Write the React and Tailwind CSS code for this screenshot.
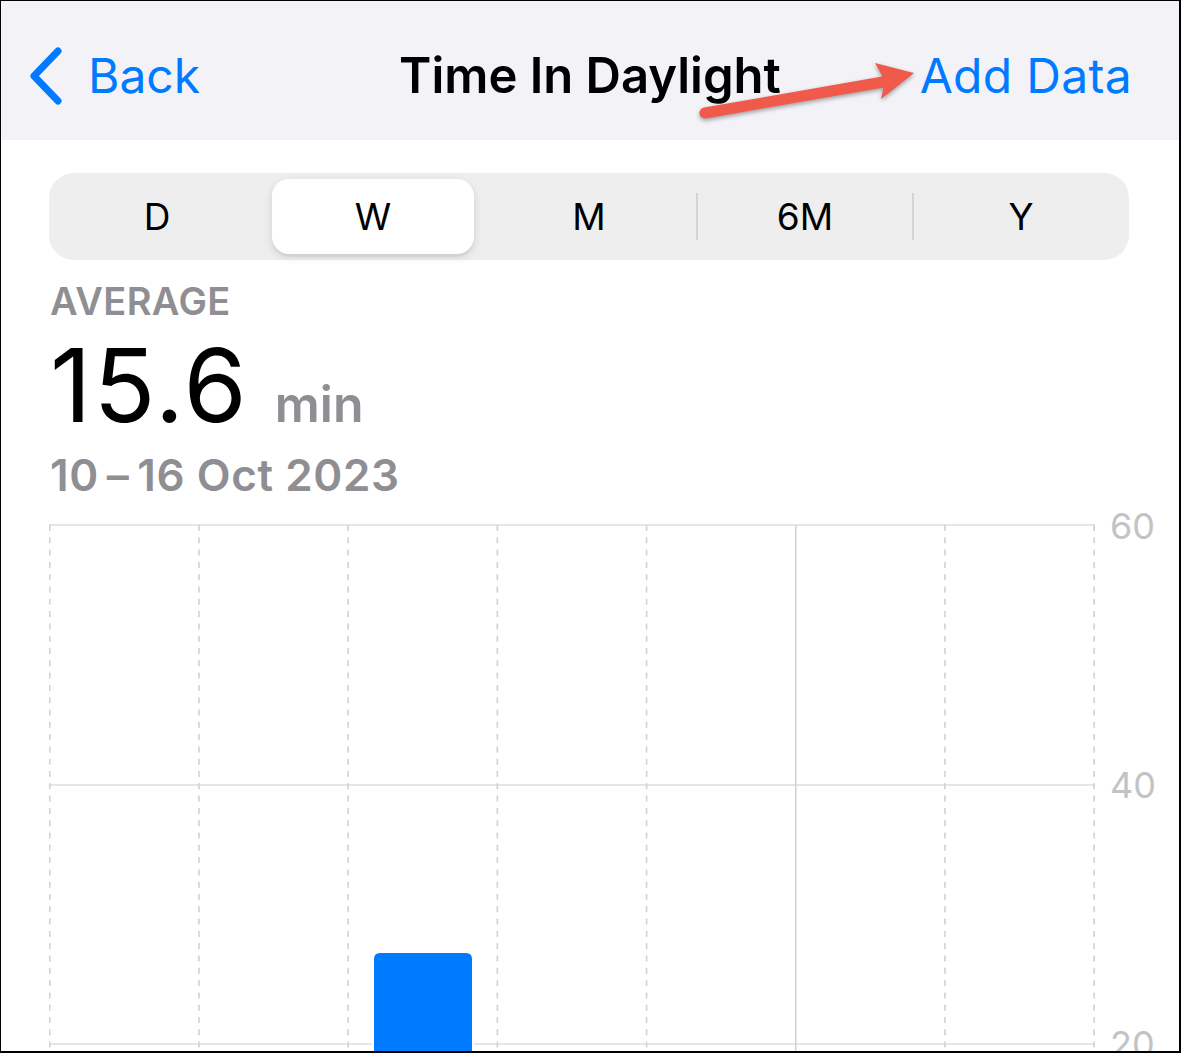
import React from "react";

const BLUE = "#007aff";

const segments = ["D", "W", "M", "6M", "Y"];
const selected = 1;

// x positions of day dividers in the week chart (index 5 = start of week, solid)
const dividers = Array.from({ length: 8 }, (_, i) => 0.75 + i * 149.2);

const BackChevron = () => (
  <svg width="36" height="60" viewBox="0 0 36 60" fill="none">
    <path d="M30 5 L6 30 L30 55" stroke={BLUE} strokeWidth="7" strokeLinecap="round" strokeLinejoin="round" />
  </svg>
);

const Arrow = () => (
  <svg
    className="absolute left-0 top-0 pointer-events-none drop-shadow-[0_2px_2px_rgba(0,0,0,0.35)]"
    width="1181"
    height="140"
    viewBox="0 0 1181 140"
  >
    <path d="M704 112 L882 81" stroke="#ef5a4b" strokeWidth="11" strokeLinecap="round" />
    <polygon points="913,72 874,62 884,80 880,98" fill="#ef5a4b" />
  </svg>
);

const SegmentedControl = () => (
  <div className="ml-[48px] mt-[33px] w-[1080px] h-[87px] bg-[#eeeeef] rounded-[25px] flex">
    {segments.map((s, i) => {
      const showSep = i > 0 && i !== selected && i !== selected + 1;
      return (
        <div key={s} className="relative flex-1 py-[6px] flex">
          {showSep && (
            <div className="absolute left-[-1px] top-[20px] h-[47px] w-[2px] bg-[#d4d4d8]" />
          )}
          <div
            className={
              i === selected
                ? "mx-[7px] flex-1 bg-white rounded-[17px] shadow-[0_3px_8px_rgba(0,0,0,0.12),0_3px_1px_rgba(0,0,0,0.04)] flex items-center justify-center"
                : "flex-1 flex items-center justify-center"
            }
          >
            <span className="text-[37px] leading-none text-black">{s}</span>
          </div>
        </div>
      );
    })}
  </div>
);

const WeekChart = () => (
  <div className="ml-[48px] mt-[27px] flex">
    <svg width="1048" height="530" viewBox="0 0 1048 530" className="shrink-0">
      {[1, 261, 520].map((y) => (
        <line key={y} x1="0" x2="1046" y1={y} y2={y} stroke="#e5e5ea" strokeWidth="2" />
      ))}
      {dividers.map((x, i) => (
        <line
          key={i}
          x1={x}
          x2={x}
          y1="1"
          y2="530"
          stroke="#d1d1d6"
          strokeWidth="1.6"
          strokeDasharray={i === 5 ? undefined : "6 6.3"}
        />
      ))}
      <path
        d="M325 435 Q325 429 331 429 L417 429 Q423 429 423 435 L423 540 L325 540 Z"
        fill={BLUE}
        stroke="#ffffff"
        strokeWidth="4"
        paintOrder="stroke"
      />
    </svg>
    <div className="ml-[13px] -mt-[16px] flex flex-col text-[36px] leading-none text-[#c3c3c7]">
      <div className="h-[259px]">60</div>
      <div className="h-[259px]">40</div>
      <div className="h-[259px]">20</div>
    </div>
  </div>
);

export default function App() {
  return (
    <div className="relative w-[1181px] h-[1053px] overflow-hidden bg-white border-l border-t border-r-2 border-b-2 border-black font-['Inter',sans-serif]">
      <header className="relative h-[139px] pt-[10px] px-[27px] bg-[#f2f2f7] grid grid-cols-[1fr_auto_1fr] items-center">
        <div className="flex items-center">
          <BackChevron />
          <span className="ml-[24px] text-[48px] leading-none" style={{ color: BLUE }}>
            Back
          </span>
        </div>
        <h1 className="text-[49px] leading-none font-semibold text-black">Time In Daylight</h1>
        <div className="flex justify-end mr-[20px]">
          <span className="text-[48px] leading-none tracking-[0.3px]" style={{ color: BLUE }}>
            Add Data
          </span>
        </div>
        <Arrow />
      </header>

      <SegmentedControl />

      <div className="ml-[49px]">
        <div className="mt-[22px] text-[38px] leading-none font-semibold tracking-[0.4px] text-[#8e8e93]">AVERAGE</div>
        <div className="mt-[14px] flex items-baseline">
          <span className="text-[102px] leading-none tracking-[2px] text-black">15.6</span>
          <span className="ml-[26px] text-[50px] leading-none font-semibold text-[#8e8e93]">min</span>
        </div>
        <div className="mt-[17px] text-[44px] leading-none font-semibold tracking-[0.6px] text-[#8e8e93]">
          10{"\u2009"}–{"\u2009"}16 Oct 2023
        </div>
      </div>

      <WeekChart />
    </div>
  );
}
